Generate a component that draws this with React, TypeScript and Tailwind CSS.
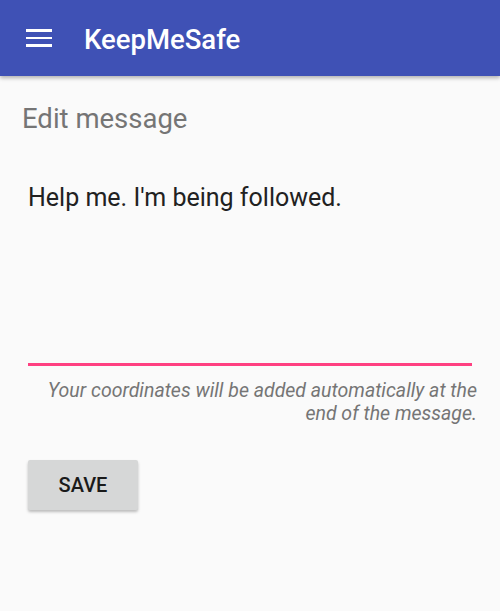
export default function App() {
  return (
    <div className="w-[500px] h-[611px] bg-[#fafafa] overflow-hidden font-['Roboto',sans-serif]">
      <header className="relative z-10 h-[76px] bg-[#3f51b5] flex items-center shadow-[0_2px_4px_rgba(0,0,0,0.3)]">
        <button className="ml-[26px] w-[26px] flex flex-col gap-[5px]" aria-label="Menu">
          <span className="block h-[2.5px] bg-white" />
          <span className="block h-[2.5px] bg-white" />
          <span className="block h-[2.5px] bg-white" />
        </button>
        <h1 className="ml-[32px] mt-[3px] text-white text-[27.5px] font-medium leading-none">KeepMeSafe</h1>
      </header>

      <main className="px-[22px]">
        <h2 className="mt-[27px] text-[#757575] text-[27.5px] leading-[32px]">Edit message</h2>

        <div className="mx-[6px] mt-[47px]">
          <p className="text-[#212121] text-[25px] leading-[32px]">Help me. I'm being followed.</p>
          <div className="mt-[149px] h-[2.5px] bg-[#ff4081]" />
          <p className="mt-[13px] -mr-[5px] text-right italic text-[19.5px] leading-[23px] text-[#757575]">
            Your coordinates will be added automatically at the end of the message.
          </p>
        </div>

        <button className="ml-[6px] mt-[35px] w-[110px] h-[50px] bg-[#d6d7d7] rounded-[2px] shadow-[0_2px_3px_rgba(0,0,0,0.25)] text-[#1a1a1a] text-[20px] font-medium uppercase">
          Save
        </button>
      </main>
    </div>
  )
}
